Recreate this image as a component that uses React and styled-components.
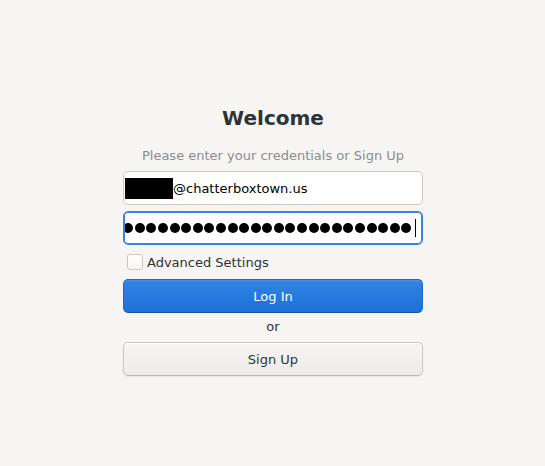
import styled, { createGlobalStyle } from "styled-components";

const GlobalStyle = createGlobalStyle`
  html, body {
    margin: 0;
    padding: 0;
    background: #f6f5f4;
  }
  body {
    font-family: "DejaVu Sans", "Noto Sans", sans-serif;
    font-size: 13px;
    color: #2e3436;
  }
`;

function App() {
  const dots = Array.from({ length: 25 });
  return (
    <Page>
      <GlobalStyle />
      <Form>
        <Title>Welcome</Title>
        <Subtitle>Please enter your credentials or Sign Up</Subtitle>
        <Entry>
          <Redacted />
          <EntryText>@chatterboxtown.us</EntryText>
        </Entry>
        <Entry focused>
          <Dots>
            {dots.map((_, i) => (
              <Dot key={i} />
            ))}
            <Caret />
          </Dots>
        </Entry>
        <CheckRow>
          <CheckBox />
          <CheckLabel>Advanced Settings</CheckLabel>
        </CheckRow>
        <Button primary>Log In</Button>
        <Or>or</Or>
        <Button>Sign Up</Button>
      </Form>
    </Page>
  );
}

const Page = styled.div`
  width: 545px;
  height: 466px;
  display: flex;
  justify-content: center;
  box-sizing: border-box;
  padding-top: 104px;
  padding-left: 1px;
`;

const Form = styled.div`
  width: 300px;
  display: flex;
  flex-direction: column;
  align-items: stretch;
`;

const Title = styled.div`
  text-align: center;
  font-size: 20px;
  font-weight: bold;
  line-height: 28px;
  color: #2e3436;
`;

const Subtitle = styled.div`
  text-align: center;
  color: #8b8e8f;
  font-size: 13px;
  line-height: 18px;
  margin-top: 15px;
  margin-bottom: 6px;
`;

const Entry = styled.div`
  box-sizing: border-box;
  height: 34px;
  background: #ffffff;
  border: 1px solid ${(p) => (p.focused ? "#3584e4" : "#cdc7c2")};
  box-shadow: ${(p) => (p.focused ? "inset 0 0 0 1px #3584e4" : "none")};
  border-radius: 5px;
  display: flex;
  align-items: center;
  padding: 0 1px;
  margin-bottom: 6px;
  overflow: hidden;
`;

const Redacted = styled.span`
  width: 48px;
  height: 21px;
  background: #000;
  flex: none;
`;

const EntryText = styled.span`
  color: #000;
  font-size: 13px;
`;

const Dots = styled.div`
  flex: 1;
  display: flex;
  justify-content: flex-end;
  align-items: center;
  gap: 1.6px;
  overflow: hidden;
  padding-right: 5px;
`;

const Dot = styled.span`
  width: 10px;
  height: 10px;
  border-radius: 50%;
  background: #000;
  flex: none;
`;

const Caret = styled.span`
  width: 1px;
  height: 18px;
  background: #000;
  margin-left: 2px;
  flex: none;
`;

const CheckRow = styled.div`
  display: flex;
  align-items: center;
  gap: 4px;
  padding-left: 4px;
  height: 22px;
  margin-bottom: 6px;
`;

const CheckBox = styled.span`
  box-sizing: border-box;
  width: 16px;
  height: 16px;
  border: 1px solid #cdc7c2;
  border-radius: 3px;
  background: linear-gradient(#ffffff, #f6f5f4);
`;

const CheckLabel = styled.span`
  color: #2e3436;
  font-size: 13px;
`;

const Button = styled.div`
  box-sizing: border-box;
  height: 34px;
  border-radius: 5px;
  display: flex;
  align-items: center;
  justify-content: center;
  font-size: 13px;
  color: ${(p) => (p.primary ? "#ffffff" : "#2e3436")};
  border: 1px solid ${(p) => (p.primary ? "#1b6acb" : "#cdc7c2")};
  border-bottom-color: ${(p) => (p.primary ? "#15539e" : "#bfb8b1")};
  background: ${(p) =>
    p.primary
      ? "linear-gradient(to top, #1c71d8 0%, #2b7de0 70%, #3584e4 100%)"
      : "linear-gradient(to top, #edebe9 0%, #f6f5f4 100%)"};
  box-shadow: ${(p) =>
    p.primary
      ? "inset 0 1px rgba(255,255,255,0.1)"
      : "inset 0 1px #fff, 0 1px 2px rgba(0,0,0,0.07)"};
`;

const Or = styled.div`
  text-align: center;
  color: #2e3436;
  font-size: 13px;
  line-height: 18px;
  margin: 5px 0 6px;
`;

export default App;
